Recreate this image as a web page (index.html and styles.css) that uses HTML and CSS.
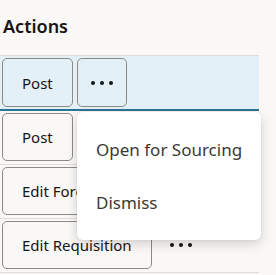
FILE: index.html
```html
<!DOCTYPE html>
<html>
<head>
<meta charset="utf-8">
<link rel="stylesheet" href="styles.css">
</head>
<body>
<div class="panel">
  <div class="header">Actions</div>
  <div class="row row-active">
    <button class="btn">Post</button>
    <button class="btn btn-more btn-more-open"><span class="dot"></span><span class="dot"></span><span class="dot"></span></button>
  </div>
  <div class="row">
    <button class="btn">Post</button>
    <button class="btn btn-more"><span class="dot"></span><span class="dot"></span><span class="dot"></span></button>
  </div>
  <div class="row">
    <button class="btn">Edit Forecast</button>
    <button class="btn btn-more"><span class="dot"></span><span class="dot"></span><span class="dot"></span></button>
  </div>
  <div class="row">
    <button class="btn">Edit Requisition</button>
    <button class="btn btn-more"><span class="dot"></span><span class="dot"></span><span class="dot"></span></button>
  </div>
  <div class="row">
    <button class="btn">Edit Requisition</button>
    <button class="btn btn-more"><span class="dot"></span><span class="dot"></span><span class="dot"></span></button>
  </div>
  <div class="menu">
    <div class="menu-item">Open for Sourcing</div>
    <div class="menu-item">Dismiss</div>
  </div>
</div>
</body>
</html>
```
FILE: styles.css
```css
html, body {
  margin: 0;
  padding: 0;
  background: #f9f8f6;
  overflow: hidden;
}
body {
  font-family: "Noto Sans", "Open Sans", sans-serif;
  color: #161513;
}
.panel {
  position: relative;
  width: 259px;
}
.header {
  box-sizing: border-box;
  height: 56px;
  padding: 14px 0 0 3px;
  font-size: 18px;
  line-height: 24px;
  font-weight: 600;
  border-bottom: 1px solid #dedbd7;
}
.row {
  display: flex;
  align-items: center;
  gap: 4px;
  padding: 2px 0 3px 2px;
  border-bottom: 1px solid #dedbd7;
}
.row-active {
  background: #e4f0f7;
  padding-bottom: 2px;
  border-bottom: 2px solid #2b7393;
}
.btn {
  box-sizing: border-box;
  height: 48px;
  padding: 0 19px;
  border: 1px solid #8d8a86;
  border-radius: 5px;
  background: transparent;
  font-family: "Noto Sans", "Open Sans", sans-serif;
  font-size: 15px;
  color: #161513;
  white-space: nowrap;
  flex-shrink: 0;
}
.row-active .btn {
  height: 49px;
}
.btn-more {
  width: 50px;
  padding: 0;
  display: flex;
  align-items: center;
  justify-content: center;
  gap: 5px;
  border-color: transparent;
}
.btn-more-open {
  border-color: #8d8a86;
}
.dot {
  width: 4px;
  height: 4px;
  border-radius: 50%;
  background: #161513;
}
.menu {
  position: absolute;
  left: 77px;
  top: 112px;
  width: 184px;
  box-sizing: border-box;
  padding: 11px 0;
  background: #ffffff;
  border-radius: 6px;
  box-shadow: 0 4px 12px rgba(0, 0, 0, 0.16), 0 0 2px rgba(0, 0, 0, 0.08);
}
.menu-item {
  height: 53px;
  line-height: 53px;
  padding-left: 19px;
  font-size: 17px;
  color: #3b3936;
  white-space: nowrap;
}
```
